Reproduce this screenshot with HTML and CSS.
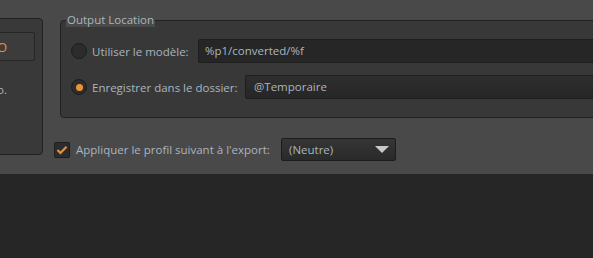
FILE: index.html
```html
<!DOCTYPE html>
<html>
<head>
<meta charset="utf-8">
<link rel="stylesheet" href="styles.css">
</head>
<body>
<div class="top">
  <div class="row">
    <div class="left-panel">
      <div class="left-input"><span class="left-glyph">O</span></div>
      <div class="left-text">o.</div>
    </div>
    <div class="right-col">
      <div class="group">
        <div class="group-title">Output Location</div>
        <div class="opt opt1">
          <span class="radio"></span>
          <span class="lbl lbl1">Utiliser le modèle:</span>
          <div class="field field1">%p1/converted/%f</div>
        </div>
        <div class="opt opt2">
          <span class="radio checked"></span>
          <span class="lbl lbl2">Enregistrer dans le dossier:</span>
          <div class="field field2">@Temporaire</div>
        </div>
      </div>
      <div class="profile-row">
        <span class="check">
          <svg width="12" height="10" viewBox="0 0 12 10"><path d="M1.5 5 L4.5 8 L10.5 1.8" fill="none" stroke="#e8913a" stroke-width="2.2"/></svg>
        </span>
        <span class="lbl plbl">Appliquer le profil suivant à l'export:</span>
        <div class="dropdown">
          <span>(Neutre)</span>
          <span class="tri"></span>
        </div>
      </div>
    </div>
  </div>
</div>
</body>
</html>
```
FILE: styles.css
```css
html, body { margin: 0; padding: 0; }
body {
  background: #262626;
  width: 593px;
  height: 258px;
  overflow: hidden;
  font-family: "Open Sans", "Noto Sans", sans-serif;
  font-size: 11.5px;
  color: #a9b6bf;
}
.top {
  background: #494949;
  height: 174px;
  overflow: hidden;
}
.row {
  display: flex;
  align-items: flex-start;
  padding-top: 18px;
}
.left-panel {
  width: 150px;
  margin-left: -107px;
  height: 137px;
  box-sizing: border-box;
  background: #393939;
  border: 1px solid #222;
  border-radius: 4px;
  flex-shrink: 0;
  position: relative;
}
.left-input {
  position: absolute;
  left: 87px;
  top: 13px;
  width: 54px;
  height: 29px;
  box-sizing: border-box;
  border: 1px solid #262626;
  border-radius: 2px;
  background: #3c3c3c;
  overflow: hidden;
}
.left-glyph {
  position: absolute;
  left: 15px;
  top: 5px;
  color: #e8913a;
  font-size: 13px;
}
.left-text {
  position: absolute;
  left: 103px;
  top: 63px;
}
.right-col {
  margin-left: 17px;
  flex-shrink: 0;
  width: 600px;
  padding-top: 2px;
}
.group {
  position: relative;
  box-sizing: border-box;
  height: 98px;
  background: #383838;
  border: 1px solid #222;
  border-radius: 4px;
  padding: 18px 0 0 10px;
}
.group-title {
  position: absolute;
  left: 5px;
  top: -8px;
  padding: 0 1px;
  background: #4a4a4a;
  line-height: 14px;
  color: #a9b6bf;
}
.opt {
  display: flex;
  align-items: center;
  height: 24px;
}
.opt2 { margin-top: 12px; }
.radio {
  width: 16px;
  height: 16px;
  box-sizing: border-box;
  border-radius: 50%;
  background: #2c2c2c;
  border: 1px solid #1d1d1d;
  display: flex;
  align-items: center;
  justify-content: center;
  flex-shrink: 0;
}
.radio.checked::after {
  content: "";
  width: 7px;
  height: 7px;
  border-radius: 50%;
  background: #ea933a;
}
.lbl { white-space: nowrap; }
.lbl1 { margin-left: 5px; width: 106px; }
.lbl2 { margin-left: 5px; width: 153px; }
.field {
  box-sizing: border-box;
  height: 24px;
  flex: 1;
  border: 1px solid #1e1e1e;
  border-radius: 2px;
  background: #262626;
  color: #a9b6bf;
  line-height: 22px;
  padding-left: 6px;
  white-space: nowrap;
}
.field2 {
  background: linear-gradient(#2e2e2e, #262626);
  padding-left: 8px;
}
.profile-row {
  display: flex;
  align-items: center;
  margin-top: 20px;
  margin-left: -6px;
  height: 23px;
}
.check {
  width: 16px;
  height: 16px;
  box-sizing: border-box;
  background: #2c2c2c;
  border: 1px solid #1d1d1d;
  border-radius: 2px;
  display: flex;
  align-items: center;
  justify-content: center;
}
.plbl { margin-left: 6px; width: 205px; }
.dropdown {
  box-sizing: border-box;
  width: 115px;
  height: 23px;
  border: 1px solid #1c1c1c;
  border-radius: 2px;
  background: linear-gradient(#353535, #2a2a2a);
  display: flex;
  align-items: center;
  justify-content: space-between;
  padding: 0 6px 0 7px;
}
.tri {
  width: 0;
  height: 0;
  border-left: 7px solid transparent;
  border-right: 7px solid transparent;
  border-top: 7px solid #c8c8c8;
}
```
